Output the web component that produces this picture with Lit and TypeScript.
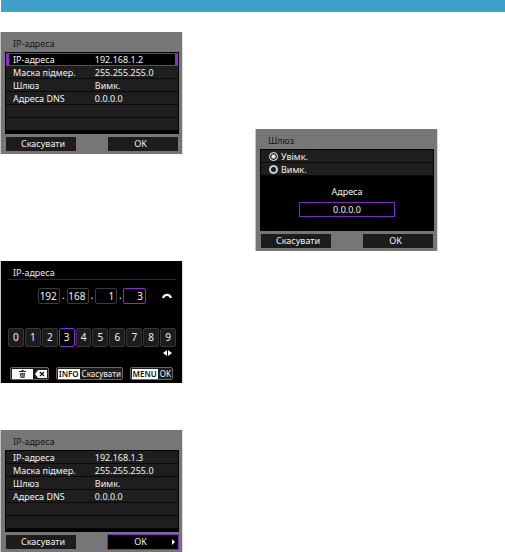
import { LitElement, html, css, nothing } from "lit";
import { customElement, property } from "lit/decorators.js";

const base = css`
  * { box-sizing: border-box; }
  :host {
    display: block;
    font-family: "Noto Sans", "Open Sans", sans-serif;
    font-size: 9px;
    line-height: 13px;
    color: #f2f2f2;
  }
  button, input {
    font: inherit;
    color: inherit;
    margin: 0;
    padding: 0;
    border: 0;
    border-radius: 0;
    min-width: 0;
    outline: none;
  }
  .screen {
    background: #767676;
    padding: 0 3px 3px 4px;
    box-shadow: -1px 0 #c4c4c4, 1px 0 #dcdcdc;
  }
  .title {
    margin: 0;
    padding: 5px 8px 2px;
    font-size: 9px;
    font-weight: 400;
    line-height: 13px;
    color: #161616;
  }
  .body { background: #000; padding: 1px 1px 3px; }
  .actions {
    display: grid;
    grid-template-columns: 70fr 32fr 70fr;
    padding: 3px 1px 0;
  }
  .actions button {
    position: relative;
    height: 14px;
    padding-left: 4px;
    line-height: 14px;
    background: #1c1c1c;
    text-align: center;
  }
  .actions button:last-child { grid-column: 3; padding: 0 5px 0 0; }
  .actions .active { background: #000; box-shadow: 0 0 0 1px #7a2cc0; }
  .next { position: absolute; right: 3px; top: 4px; width: 3px; height: 6px; fill: #fff; }
`;

@customElement("settings-screen")
class SettingsScreen extends LitElement {
  @property() address = "";
  @property({ type: Boolean }) confirm = false;

  static styles = [base, css`
    table { width: 100%; border-collapse: separate; border-spacing: 0; table-layout: fixed; }
    th, td {
      height: 13px;
      padding: 1px 0 0;
      font-weight: 400;
      text-align: left;
      white-space: nowrap;
      background: #1e1e1e;
      border-bottom: 1px solid #080808;
      line-height: 11px;
    }
    th { width: 47%; padding-left: 7px; }
    td { padding-left: 8px; }
    .selected th, .selected td {
      padding-top: 0;
      background: #000;
      border-top: 1px solid #7a2cc0;
      border-bottom: 1px solid #7a2cc0;
    }
    .selected th { border-left: 3px solid #8a2cd8; padding-left: 4px; }
    .selected td { border-right: 3px solid #8a2cd8; }
  `];

  render() {
    const rows = [
      ["IP-адреса", this.address],
      ["Маска підмер.", "255.255.255.0"],
      ["Шлюз", "Вимк."],
      ["Адреса DNS", "0.0.0.0"],
      ["", ""],
      ["", ""],
    ];
    return html`
      <section class="screen">
        <h2 class="title">IP-адреса</h2>
        <div class="body">
          <table>
            ${rows.map(([name, value], i) => html`
              <tr class=${i === 0 && !this.confirm ? "selected" : ""}>
                <th scope="row">${name}</th><td>${value}</td>
              </tr>`)}
          </table>
        </div>
        <div class="actions">
          <button>Скасувати</button>
          <button class=${this.confirm ? "active" : ""}>OK${this.confirm
            ? html`<svg class="next" viewBox="0 0 3 6" aria-hidden="true"><path d="M0 0 3 3 0 6z"/></svg>`
            : nothing}</button>
        </div>
      </section>`;
  }
}

@customElement("gateway-screen")
class GatewayScreen extends LitElement {
  static styles = [base, css`
    .option {
      display: flex;
      align-items: center;
      gap: 3px;
      height: 13px;
      padding-left: 8px;
      background: #1e1e1e;
      border-bottom: 1px solid #080808;
    }
    .option input {
      appearance: none;
      width: 9px;
      height: 9px;
      border: 1px solid #fff;
      border-radius: 50%;
      box-shadow: inset 0 0 0 1px #ccc;
    }
    .option input:checked {
      box-shadow: none;
      background: radial-gradient(circle, #fff 1px, #1e1e1e 3px);
    }
    .entry {
      display: flex;
      flex-direction: column;
      align-items: center;
      gap: 4px;
      padding: 9px 0 11px;
    }
    .entry input {
      width: 56%;
      height: 15px;
      background: #000;
      border: 1px solid #7a2cc0;
      text-align: center;
    }
  `];

  render() {
    return html`
      <section class="screen">
        <h2 class="title">Шлюз</h2>
        <div class="body">
          <label class="option"><input type="radio" name="gateway" checked>Увімк.</label>
          <label class="option"><input type="radio" name="gateway">Вимк.</label>
          <div class="entry">
            <label for="address">Адреса</label>
            <input id="address" type="text" value="0.0.0.0">
          </div>
        </div>
        <div class="actions"><button>Скасувати</button><button>OK</button></div>
      </section>`;
  }
}

@customElement("keypad-screen")
class KeypadScreen extends LitElement {
  static styles = [base, css`
    .screen { background: #000; padding: 6px 6px 3px 7px; }
    .title { padding: 0 5px; color: #e6e6e6; border-bottom: 1px solid #3c145e; line-height: 12px; }
    .octets {
      display: grid;
      grid-template-columns: 22fr 7fr 22fr 7fr 22fr 6fr 23fr;
      margin: 8px 30px 0;
      font-size: 10px;
      line-height: 15px;
      text-align: center;
    }
    .octets input {
      width: 100%;
      height: 16px;
      padding-right: 2px;
      background: #000;
      border: 1px solid #3c3c3c;
      border-radius: 2px;
      text-align: right;
    }
    .octets .current { border-color: #8a2cd8; }
    .entry { position: relative; }
    .dial { position: absolute; right: 4px; top: 5px; width: 10px; height: 6px; }
    .digits { display: grid; grid-template-columns: repeat(10, 1fr); gap: 1px; margin-top: 24px; }
    .digits button {
      height: 19px;
      background: #1c1c1c;
      border: 1px solid #363636;
      border-radius: 2px;
      font-size: 10px;
      line-height: 17px;
      text-align: center;
    }
    .digits .current { background: #000; border-color: #8a2cd8; }
    .arrows { display: block; width: 9px; height: 6px; margin: 3px 4px 11px auto; fill: #fff; }
    .keys { display: flex; justify-content: space-between; margin: 0 3px 0 2px; }
    .keys button {
      display: flex;
      align-items: center;
      gap: 2px;
      height: 13px;
      padding: 0 1px;
      background: #1c1c1c;
      border: 1px solid #666;
      border-radius: 2px;
      font-size: 8px;
      line-height: 11px;
    }
    .cap {
      height: 10px;
      padding: 0 1px;
      background: #fff;
      color: #111;
      font-weight: 600;
      line-height: 10px;
    }
    .trash { width: 21px; height: 10px; }
    .erase { width: 12px; height: 8px; }
  `];

  render() {
    const octets = ["192", "168", "1", "3"];
    return html`
      <section class="screen">
        <h2 class="title">IP-адреса</h2>
        <div class="entry">
          <div class="octets">
            ${octets.map((value, i) => html`${i ? html`<span>.</span>` : nothing}<input
              class=${i === 3 ? "current" : ""} aria-label="Октет ${i + 1}" value=${value}>`)}
          </div>
          <svg class="dial" viewBox="0 0 10 6" aria-hidden="true">
            <path d="M1 5Q2 1.800 5 1.800T9 5" fill="none" stroke="#fff" stroke-width="2.200"/>
          </svg>
        </div>
        <div class="digits">
          ${Array.from({ length: 10 }, (_, n) => html`<button class=${n === 3 ? "current" : ""}>${n}</button>`)}
        </div>
        <svg class="arrows" viewBox="0 0 9 6" aria-hidden="true"><path d="M4 0v6L0 3zM5 0v6l4-3z"/></svg>
        <div class="keys">
          <button aria-label="Видалити">
            <svg class="trash" viewBox="0 0 21 10" aria-hidden="true">
              <path fill="#fff" d="M0 0h21v10H0z"/>
              <path fill="#222" d="M9.5 1h2v1H14v1H7V2h2.500zM8 4h5l-.6 5H8.600z"/>
              <path stroke="#fff" stroke-width=".6" d="M9.800 4.500v4M11.200 4.500v4"/>
            </svg>
            <svg class="erase" viewBox="0 0 12 8" aria-hidden="true">
              <path fill="#fff" d="M0 4 3 0h9v8H3z"/>
              <path stroke="#111" stroke-width="1.300" d="m5 2 4 4m0-4L5 6"/>
            </svg>
          </button>
          <button><span class="cap">INFO</span>Скасувати</button>
          <button><span class="cap">MENU</span>OK</button>
        </div>
      </section>`;
  }
}

@customElement("app-root")
class AppRoot extends LitElement {
  static styles = css`
    :host { display: block; background: #fff; }
    .banner { height: 12px; margin-left: 1px; background: #40a0cc; }
    main {
      display: grid;
      grid-template-columns: 181fr 74fr 181fr 68fr;
      align-items: start;
      padding: 20px 0 0 1px;
    }
    .steps { display: grid; }
    .keypad { margin-top: 107px; }
    .result { margin-top: 47px; }
    .gateway { grid-column: 3; margin-top: 97px; }
  `;

  render() {
    return html`
      <div class="banner"></div>
      <main>
        <div class="steps">
          <settings-screen address="192.168.1.2"></settings-screen>
          <keypad-screen class="keypad"></keypad-screen>
          <settings-screen class="result" address="192.168.1.3" confirm></settings-screen>
        </div>
        <gateway-screen class="gateway"></gateway-screen>
      </main>`;
  }
}
